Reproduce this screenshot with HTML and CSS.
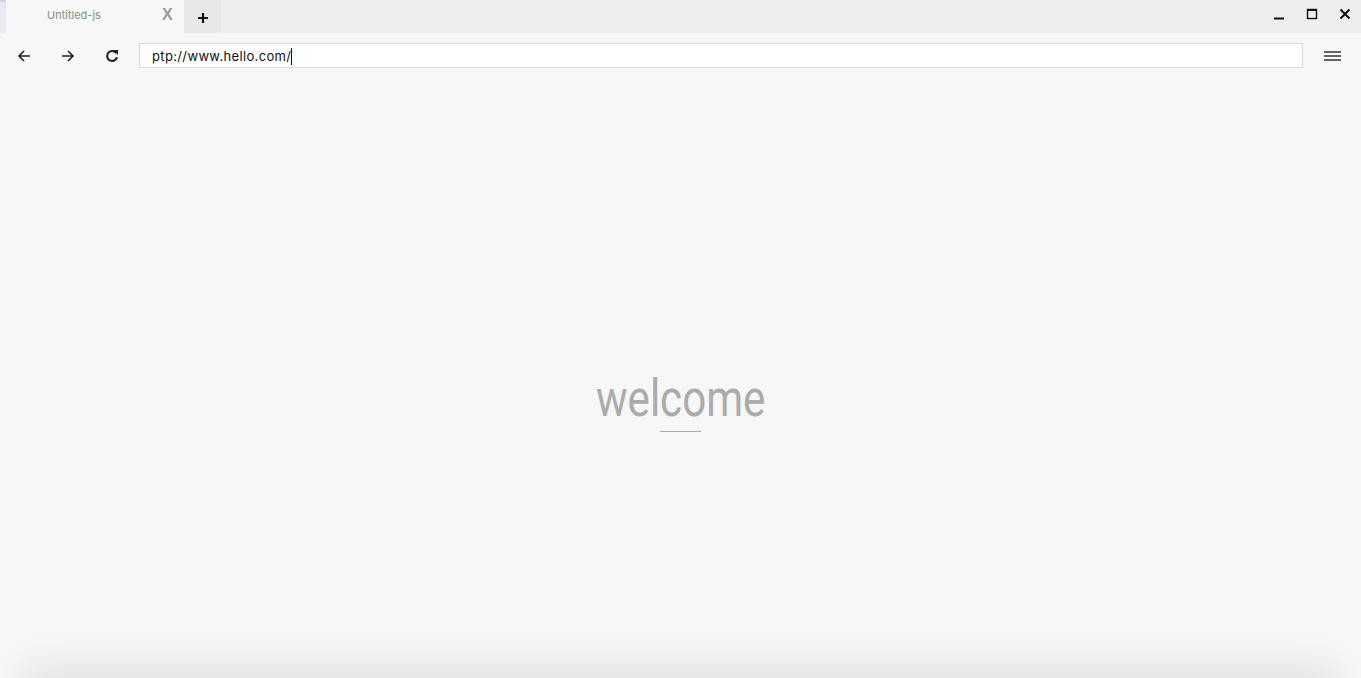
FILE: index.html
```html
<!DOCTYPE html>
<html lang="en">
<head>
  <meta charset="UTF-8">
  <title>Untitled-js</title>
  <link rel="stylesheet" href="styles.css">
</head>
<body>
  <div class="titlebar">
    <div class="edge"></div>
    <div class="tab">
      <span class="tab-title">Untitled-js</span>
      <span class="tab-close">X</span>
    </div>
    <div class="new-tab">
      <svg width="12" height="12" viewBox="0 0 12 12"><path d="M6 1v10M1 6h10" stroke="#111" stroke-width="2.2"/></svg>
    </div>
    <div class="spacer"></div>
    <div class="win-btns">
      <svg width="12" height="12" viewBox="0 0 12 12"><path d="M1 10.5h10" stroke="#111" stroke-width="2"/></svg>
      <svg width="12" height="12" viewBox="0 0 12 12"><rect x="1.5" y="1.5" width="9" height="9" fill="none" stroke="#111" stroke-width="1.4"/><path d="M1 2h10" stroke="#111" stroke-width="2"/></svg>
      <svg width="12" height="12" viewBox="0 0 12 12"><path d="M1.5 1.5l9 9M10.5 1.5l-9 9" stroke="#111" stroke-width="2"/></svg>
    </div>
  </div>

  <div class="toolbar">
    <button class="nav-btn" title="Back">
      <svg width="14" height="14" viewBox="0 0 14 14"><path d="M13 7H2M7 2L2 7l5 5" fill="none" stroke="#222" stroke-width="1.6"/></svg>
    </button>
    <button class="nav-btn" title="Forward">
      <svg width="14" height="14" viewBox="0 0 14 14"><path d="M1 7h11M7 2l5 5-5 5" fill="none" stroke="#222" stroke-width="1.6"/></svg>
    </button>
    <button class="nav-btn" title="Reload">
      <svg width="14" height="14" viewBox="0 0 14 14"><path d="M11.3 4.2A5 5 0 1 0 12 8.2" fill="none" stroke="#222" stroke-width="2.2"/><path d="M8 1h5v5z" fill="#222"/></svg>
    </button>
    <div class="url">ptp://www.hello.com/<span class="caret"></span></div>
    <button class="menu-btn" title="Menu">
      <svg width="17" height="14" viewBox="0 0 17 14"><path d="M0 3h17M0 7h17M0 11h17" stroke="#333" stroke-width="1.6"/></svg>
    </button>
  </div>

  <main class="page">
    <div class="welcome">
      <h1>welcome</h1>
      <div class="rule"></div>
    </div>
  </main>
</body>
</html>
```

FILE: styles.css
```css
html, body {
  margin: 0;
  height: 100%;
}
body {
  background: #f7f7f7;
  font-family: Inter, "Liberation Sans", Arial, sans-serif;
  display: flex;
  flex-direction: column;
  overflow: hidden;
}

.titlebar {
  height: 33px;
  display: flex;
  background: #eeeeee;
}
.edge {
  width: 6px;
  background: #e9e8ec;
  border-top: 2px solid #d9cde3;
  box-sizing: border-box;
}
.tab {
  width: 178px;
  background: #f7f7f7;
  display: flex;
  align-items: center;
  box-sizing: border-box;
  padding-left: 41px;
  padding-bottom: 3px;
}
.tab-title {
  font-size: 11px;
  color: #8a8a8a;
  flex: 1;
}
.tab-close {
  font-family: "Liberation Sans", Arial, sans-serif;
  font-weight: bold;
  font-size: 16px;
  color: #9a9a9a;
  width: 22px;
  text-align: left;
}
.new-tab {
  width: 37px;
  background: #e8e8e8;
  display: flex;
  align-items: center;
  justify-content: center;
  padding-top: 2px;
  box-sizing: border-box;
}
.spacer { flex: 1; }
.win-btns {
  display: flex;
  gap: 21px;
  align-items: center;
  padding: 0 10px 6px 0;
}

.toolbar {
  height: 45px;
  display: flex;
  align-items: center;
  padding: 0 0 2px 2px;
}
.nav-btn, .menu-btn {
  background: transparent;
  border: none;
  padding: 0;
  width: 44px;
  height: 30px;
  display: flex;
  align-items: center;
  justify-content: center;
}
.nav-btn:nth-child(3) { margin-right: 5px; }
.url {
  flex: 1;
  height: 25px;
  box-sizing: border-box;
  background: #fff;
  border: 1px solid #dadada;
  font-size: 13px;
  color: #111;
  line-height: 24px;
  padding-left: 12px;
  letter-spacing: 0.35px;
}
.caret {
  display: inline-block;
  width: 1px;
  height: 17px;
  background: #111;
  vertical-align: -4px;
}
.menu-btn {
  width: 58px;
}

.page {
  flex: 1;
  display: flex;
  align-items: center;
  justify-content: center;
  padding-top: 47px;
}
.welcome {
  display: flex;
  flex-direction: column;
  align-items: center;
}
.welcome h1 {
  margin: 0;
  font-family: Roboto, sans-serif;
  font-weight: 400;
  font-size: 52px;
  line-height: 52px;
  color: #ababab;
  transform: scaleX(0.81);
}
.rule {
  width: 41px;
  height: 1px;
  background: #a9a9a9;
  margin-top: 6px;
}

body::after {
  content: "";
  position: fixed;
  left: 30px;
  right: 30px;
  bottom: -30px;
  height: 30px;
  border-radius: 30px;
  box-shadow: 0 0 40px 12px rgba(0, 0, 0, 0.09);
}
```
